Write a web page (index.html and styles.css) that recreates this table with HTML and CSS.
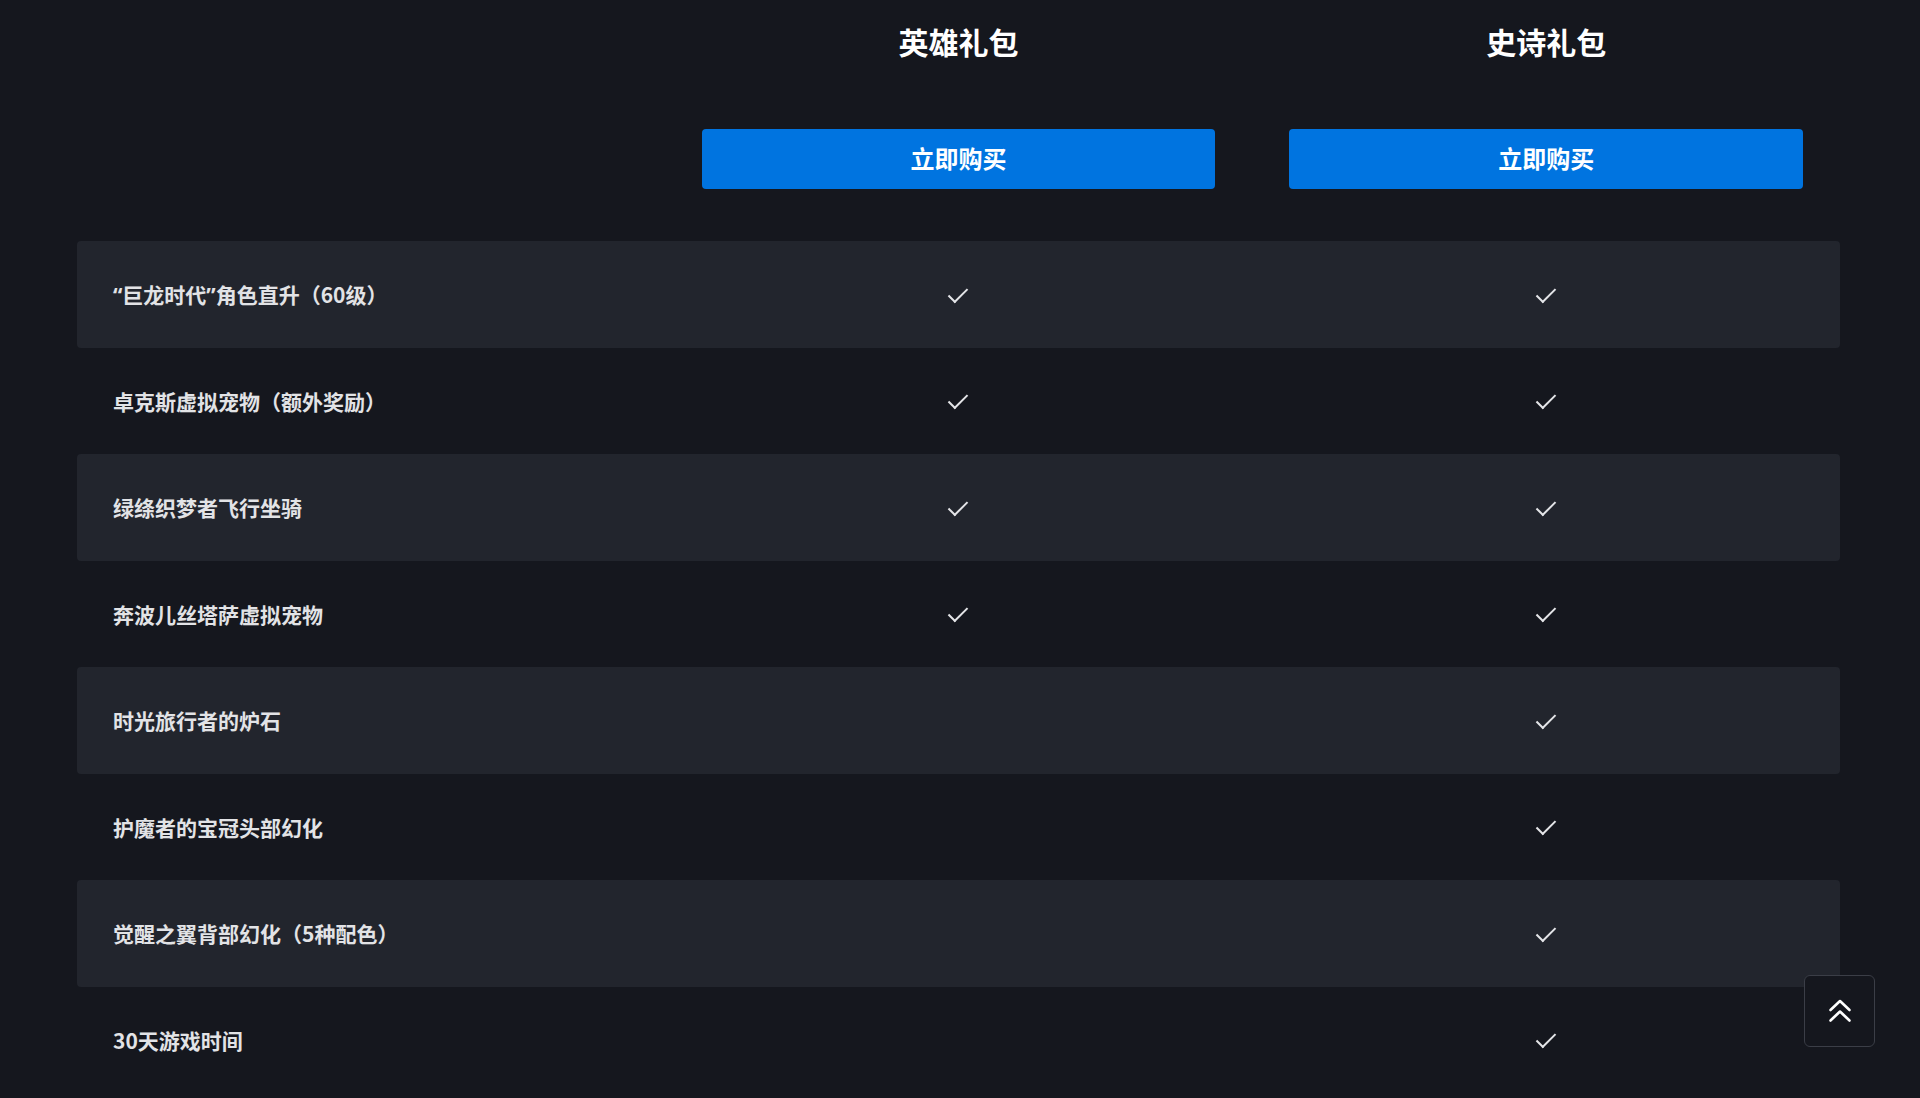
FILE: index.html
```html
<!DOCTYPE html>
<html lang="zh-CN">
<head>
<meta charset="utf-8">
<title>礼包对比</title>
<link rel="stylesheet" href="styles.css">
</head>
<body>
<main class="compare">
  <div class="head">
    <div class="head-cell empty"></div>
    <div class="head-cell">
      <h2 class="tier">英雄礼包</h2>
      <a class="buy" href="#">立即购买</a>
    </div>
    <div class="head-cell">
      <h2 class="tier">史诗礼包</h2>
      <a class="buy" href="#">立即购买</a>
    </div>
  </div>
  <div class="rows">
    <div class="row"><div class="label"><span class="q">“</span>巨龙时代<span class="q">”</span>角色直升（60级）</div><div class="cell"><span class="chk"></span></div><div class="cell"><span class="chk"></span></div></div>
    <div class="row"><div class="label">卓克斯虚拟宠物（额外奖励）</div><div class="cell"><span class="chk"></span></div><div class="cell"><span class="chk"></span></div></div>
    <div class="row"><div class="label">绿绦织梦者飞行坐骑</div><div class="cell"><span class="chk"></span></div><div class="cell"><span class="chk"></span></div></div>
    <div class="row"><div class="label">奔波儿丝塔萨虚拟宠物</div><div class="cell"><span class="chk"></span></div><div class="cell"><span class="chk"></span></div></div>
    <div class="row"><div class="label">时光旅行者的炉石</div><div class="cell"></div><div class="cell"><span class="chk"></span></div></div>
    <div class="row"><div class="label">护魔者的宝冠头部幻化</div><div class="cell"></div><div class="cell"><span class="chk"></span></div></div>
    <div class="row"><div class="label">觉醒之翼背部幻化（5种配色）</div><div class="cell"></div><div class="cell"><span class="chk"></span></div></div>
    <div class="row"><div class="label">30天游戏时间</div><div class="cell"></div><div class="cell"><span class="chk"></span></div></div>
  </div>
</main>
<a class="to-top" href="#" aria-label="返回顶部">
  <svg width="24" height="24" viewBox="0 0 24 24" fill="none" stroke="#ffffff" stroke-width="2.6" stroke-linecap="round" stroke-linejoin="round"><path d="M2.5 11 L12 2 L21.5 11"/><path d="M2.5 21.5 L12 12.5 L21.5 21.5"/></svg>
</a>
</body>
</html>
```

FILE: styles.css
```css
html, body {
  margin: 0;
  padding: 0;
  background: #15171e;
}
body {
  font-family: "Noto Sans CJK SC", "Noto Sans", sans-serif;
  color: #e4e5e8;
  overflow: hidden;
}
.compare {
  padding: 0 80px 0 77px;
}
.head {
  display: grid;
  grid-template-columns: 1fr 1fr 1fr;
}
.head-cell {
  display: flex;
  flex-direction: column;
  align-items: center;
  padding: 21px 37px 0;
}
.tier {
  margin: 0;
  font-size: 30px;
  line-height: 40px;
  font-weight: 700;
  color: #ffffff;
}
.buy {
  margin-top: 68px;
  align-self: stretch;
  height: 60px;
  box-sizing: border-box;
  padding-bottom: 3px;
  border-radius: 4px;
  background: #0074e0;
  color: #ffffff;
  font-size: 24px;
  font-weight: 700;
  text-decoration: none;
  display: flex;
  align-items: center;
  justify-content: center;
}
.rows {
  margin-top: 52px;
}
.row {
  display: grid;
  grid-template-columns: 1fr 1fr 1fr;
  height: 106.5px;
  align-items: center;
  border-radius: 4px;
}
.row:nth-child(odd) {
  background: #22252d;
}
.label {
  padding-left: 36px;
  font-size: 21px;
  font-weight: 700;
  color: #e2e3e6;
  white-space: nowrap;
}
.q {
  font-family: "Noto Sans", "Liberation Sans", sans-serif;
}
.cell {
  display: flex;
  justify-content: center;
  align-items: center;
}
.chk {
  width: 8px;
  height: 17px;
  border-right: 2.8px solid #e4e5e8;
  border-bottom: 2.8px solid #e4e5e8;
  transform: translateY(-1.5px) rotate(45deg);
}
.to-top {
  position: fixed;
  right: 45px;
  bottom: 51px;
  width: 71px;
  height: 72px;
  box-sizing: border-box;
  border: 1px solid #3b3e47;
  border-radius: 6px;
  background: #15171e;
  display: flex;
  align-items: center;
  justify-content: center;
}
```
